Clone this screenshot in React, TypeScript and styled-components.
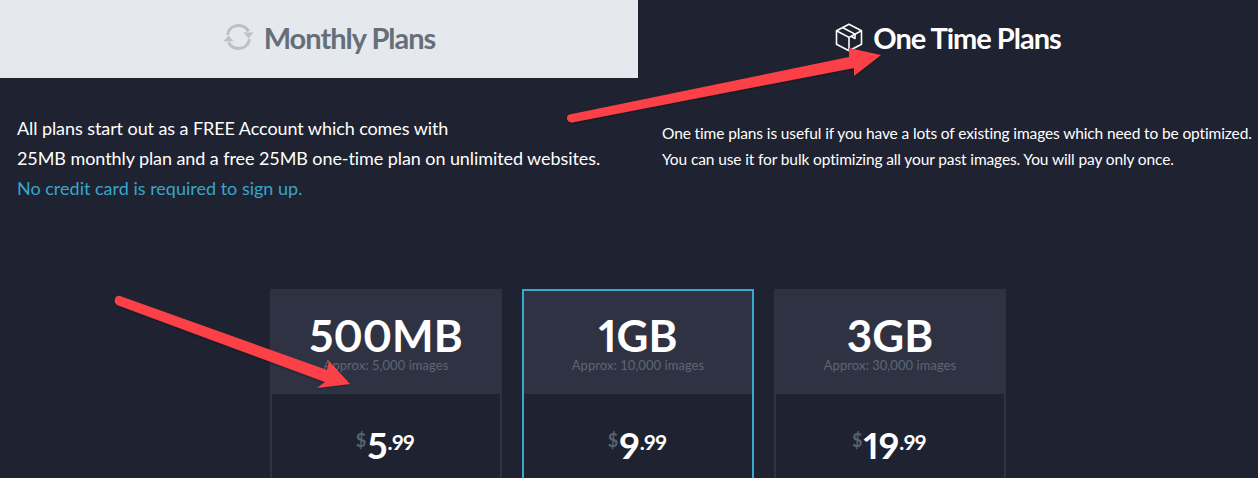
import React from 'react';
import styled, { createGlobalStyle } from 'styled-components';

const GlobalStyle = createGlobalStyle`
  html, body {
    margin: 0;
    padding: 0;
    height: 478px;
    overflow: hidden;
    background: #1f2230;
  }
`;

const Page = styled.div`
  position: relative;
  width: 1258px;
  height: 478px;
  overflow: hidden;
  background: #1f2230;
  font-family: 'Lato', sans-serif;
  color: #fff;
`;

const Tabs = styled.div`
  display: grid;
  grid-template-columns: 638px 620px;
  height: 78px;
`;

const Tab = styled.div<{ $active?: boolean }>`
  display: flex;
  align-items: center;
  justify-content: center;
  gap: 10px;
  padding-bottom: 4px;
  padding-left: ${p => (p.$active ? '0' : '20px')};
  box-sizing: border-box;
  background: ${p => (p.$active ? 'transparent' : '#e5e9ed')};
  color: ${p => (p.$active ? '#fff' : '#656f79')};
  font-size: 29px;
  font-weight: 700;
  letter-spacing: -1px;
`;

const Intro = styled.div`
  display: grid;
  grid-template-columns: 662px 596px;
  height: 211px;
`;

const LeftText = styled.div`
  padding: 35px 0 0 17px;
  font-size: 18px;
  line-height: 30px;
  letter-spacing: -0.08px;
`;

const Hint = styled.div`
  color: #35a6cd;
  letter-spacing: 0;
`;

const RightText = styled.div`
  padding: 42px 0 0;
  font-size: 15.5px;
  line-height: 26px;
  letter-spacing: -0.12px;
  white-space: nowrap;
`;

const Cards = styled.div`
  display: flex;
  gap: 20px;
  padding-left: 270px;
`;

const Card = styled.div<{ $selected?: boolean }>`
  width: 232px;
  height: 260px;
  box-sizing: border-box;
  background: #2f3242;
  padding: ${p => (p.$selected ? '0' : '0 2px')};
  border: ${p => (p.$selected ? '2px solid #3aa8cc' : '0')};
  border-bottom: 0;
`;

const CardHead = styled.div<{ $selected?: boolean }>`
  height: ${p => (p.$selected ? '103px' : '105px')};
  display: flex;
  flex-direction: column;
  align-items: center;
  padding-top: ${p => (p.$selected ? '24px' : '26px')};
  box-sizing: border-box;
`;

const Size = styled.div`
  font-size: 44px;
  font-weight: 700;
  line-height: 40px;
  font-variant-numeric: proportional-nums;
`;

const Approx = styled.div`
  margin-top: 1px;
  font-size: 13px;
  line-height: 18px;
  color: #5e6672;
  letter-spacing: 0.05px;
`;

const CardBody = styled.div`
  height: 155px;
  background: #1f2230;
  display: flex;
  justify-content: center;
  padding-top: 34px;
  padding-right: 2px;
  box-sizing: border-box;
`;

const Price = styled.div`
  display: flex;
  align-items: flex-start;
  font-weight: 700;
  font-variant-numeric: proportional-nums;
`;

const Currency = styled.span`
  font-size: 18px;
  line-height: 24px;
  color: #58626e;
  margin-right: 1px;
`;

const Whole = styled.span`
  font-size: 37px;
  line-height: 34px;
`;

const Cents = styled.span`
  font-size: 21px;
  line-height: 28px;
  letter-spacing: -0.5px;
`;

const Overlay = styled.svg`
  position: absolute;
  left: 0;
  top: 0;
  pointer-events: none;
`;

const RefreshIcon = () => (
  <svg width="31" height="28" viewBox="0 0 31 28" fill="none">
    <path d="M4.5 12C5.5 6 10 2.5 15.5 2.5C20 2.5 23.5 4.7 25.5 8.5" stroke="#bcc1c7" strokeWidth="3" />
    <path d="M26.5 16C25.5 22 21 25.5 15.5 25.5C11 25.5 7.5 23.3 5.5 19.5" stroke="#bcc1c7" strokeWidth="3" />
    <path d="M20.5 9.5L30.5 9.5L25.5 15.5Z" fill="#bcc1c7" />
    <path d="M0.5 18.5L10.5 18.5L5.5 12.5Z" fill="#bcc1c7" />
  </svg>
);

const BoxIcon = () => (
  <svg width="28" height="29" viewBox="0 0 28 29" fill="none" stroke="#fff" strokeWidth="1.6" strokeLinejoin="round">
    <path d="M14 1.2L26.5 7.8V21.2L14 27.8L1.5 21.2V7.8Z" />
    <path d="M1.5 7.8L14 14.4L26.5 7.8" />
    <path d="M14 14.4V27.8" />
    <path d="M7.5 4.5L20 11.1V15.5L16.5 13.5" />
  </svg>
);

const plans = [
  { size: '500MB', approx: 'Approx: 5,000 images', price: '5' },
  { size: '1GB', approx: 'Approx: 10,000 images', price: '9', selected: true },
  { size: '3GB', approx: 'Approx: 30,000 images', price: '19' },
];

export default function App() {
  return (
    <Page>
      <GlobalStyle />
      <Tabs>
        <Tab>
          <RefreshIcon />
          Monthly Plans
        </Tab>
        <Tab $active>
          <BoxIcon />
          One Time Plans
        </Tab>
      </Tabs>
      <Intro>
        <LeftText>
          <div>All plans start out as a FREE Account which comes with</div>
          <div>25MB monthly plan and a free 25MB one-time plan on unlimited websites.</div>
          <Hint>No credit card is required to sign up.</Hint>
        </LeftText>
        <RightText>
          <div>One time plans is useful if you have a lots of existing images which need to be optimized.</div>
          <div>You can use it for bulk optimizing all your past images. You will pay only once.</div>
        </RightText>
      </Intro>
      <Cards>
        {plans.map(plan => (
          <Card key={plan.size} $selected={plan.selected}>
            <CardHead $selected={plan.selected}>
              <Size>{plan.size}</Size>
              <Approx>{plan.approx}</Approx>
            </CardHead>
            <CardBody>
              <Price>
                <Currency>$</Currency>
                <Whole>{plan.price}</Whole>
                <Cents>.99</Cents>
              </Price>
            </CardBody>
          </Card>
        ))}
      </Cards>
      <Overlay width="1258" height="478" viewBox="0 0 1258 478">
        <defs>
          <filter id="arrowShadow" x="-5%" y="-5%" width="110%" height="115%">
            <feDropShadow dx="0" dy="1" stdDeviation="1" floodColor="#000" floodOpacity="0.35" />
          </filter>
        </defs>
        <g fill="#fb4146" filter="url(#arrowShadow)">
          <path d="M569.5 114.5L849 57L849 48L881 55L854 76L854 68L572 122.5Q567 122 567 118Q567 115 569.5 114.5Z" />
          <path d="M120 296L327 370L329 361L350 384L317 388L325 382L117 305Q114 303 115 299Q116.5 295 120 296Z" />
        </g>
      </Overlay>
    </Page>
  );
}
